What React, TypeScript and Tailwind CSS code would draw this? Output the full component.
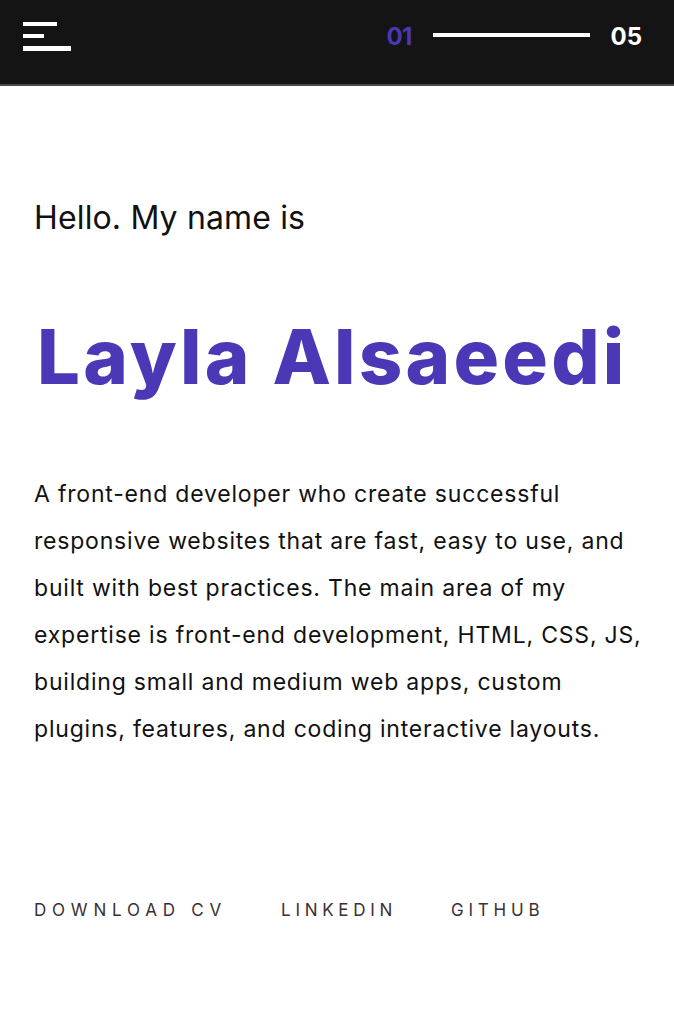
import React from "react";

export default function App() {
  const font = { fontFamily: "Inter, 'Noto Sans', sans-serif" };
  const lines = [
    "A front-end developer who create successful",
    "responsive websites that are fast, easy to use, and",
    "built with best practices. The main area of my",
    "expertise is front-end development, HTML, CSS, JS,",
    "building small and medium web apps, custom",
    "plugins, features, and coding interactive layouts.",
  ];
  return (
    <div className="min-h-[1024px] bg-white" style={font}>
      <header className="h-[86px] bg-[#141414] border-b-2 border-[#4a4a4a] flex items-center justify-between pl-[23px] pr-[32px] pb-[12px]">
        <div className="flex flex-col gap-[8px]">
          <div className="h-[4px] w-[34px] bg-white" />
          <div className="h-[4px] w-[21px] bg-white" />
          <div className="h-[5px] w-[48px] bg-white" />
        </div>
        <div className="flex items-center pt-[2px]">
          <span className="text-[24px] font-bold text-[#4a38b6] tracking-[-0.8px] leading-none">01</span>
          <div className="ml-[22px] mr-[20px] h-[4px] w-[157px] bg-white -mt-[5px]" />
          <span className="text-[24px] font-bold text-white leading-none">05</span>
        </div>
      </header>
      <main className="pl-[34px] pr-[10px]">
        <p className="mt-[112px] text-[32px] leading-[40px] text-[#111] tracking-[0.15px]">Hello. My name is</p>
        <h1 className="mt-[73px] pl-[3px] text-[76px] leading-[90px] font-extrabold text-[#4a38b6] tracking-[3.2px] whitespace-nowrap">
          Layla Alsaeedi
        </h1>
        <p className="mt-[70px] text-[23px] leading-[47px] text-[#111] tracking-[0.8px]">
          {lines.map((l, i) => (
            <span key={i} className="block whitespace-nowrap">
              {l}
            </span>
          ))}
        </p>
        <div className="mt-[145px] flex text-[17px] text-[#3b2f35] uppercase">
          <a className="tracking-[5.8px]">Download CV</a>
          <a className="ml-[54px] tracking-[4.7px]">Linkedin</a>
          <a className="ml-[54px] tracking-[4.8px]">Github</a>
        </div>
      </main>
    </div>
  );
}
